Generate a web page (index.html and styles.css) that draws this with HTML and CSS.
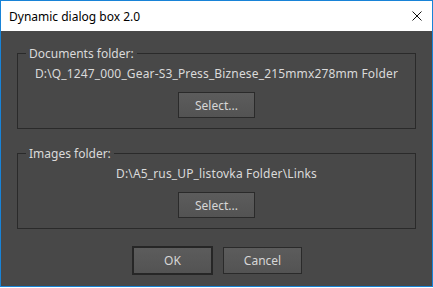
FILE: index.html
```html
<!DOCTYPE html>
<html>
<head>
<meta charset="utf-8">
<link rel="stylesheet" href="styles.css">
</head>
<body>
<div class="window">
  <div class="titlebar">
    <span class="title">Dynamic dialog box 2.0</span>
    <span class="close">
      <svg width="10" height="10" viewBox="0 0 10 10"><path d="M0.5 0.5 L9.5 9.5 M9.5 0.5 L0.5 9.5" stroke="#111" stroke-width="1" fill="none"/></svg>
    </span>
  </div>
  <div class="content">
    <fieldset class="group">
      <legend class="legend">Documents folder:</legend>
      <div class="path">D:\Q_1247_000_Gear-S3_Press_Biznese_215mmx278mm Folder</div>
      <button class="btn select">Select...</button>
    </fieldset>
    <fieldset class="group">
      <legend class="legend">Images folder:</legend>
      <div class="path">D:\A5_rus_UP_listovka Folder\Links</div>
      <button class="btn select">Select...</button>
    </fieldset>
    <div class="actions">
      <button class="btn ok">OK</button>
      <button class="btn cancel">Cancel</button>
    </div>
  </div>
</div>
</body>
</html>
```

FILE: styles.css
```css
html, body {
  margin: 0;
  padding: 0;
  background: #ffffff;
}
.window {
  box-sizing: border-box;
  width: 433px;
  height: 287px;
  border: 1px solid #1883d7;
  display: flex;
  flex-direction: column;
  font-family: "Noto Sans", "Open Sans", sans-serif;
  font-size: 12px;
}
.titlebar {
  height: 30px;
  flex: none;
  background: #ffffff;
  display: flex;
  align-items: center;
  justify-content: space-between;
  padding: 0 10px 0 8px;
}
.title {
  color: #000;
  font-size: 12px;
}
.close {
  display: flex;
  width: 10px;
  height: 10px;
}
.content {
  flex: 1;
  background: #484848;
  padding: 15px 16px 0 16px;
  display: flex;
  flex-direction: column;
  gap: 17px;
}
.group {
  margin: 0;
  border: 1px solid #2a2a2a;
  padding: 5px 0 10px;
  display: flex;
  flex-direction: column;
  align-items: center;
  gap: 10px;
}
.legend {
  margin-left: 8px;
  padding: 0 3px;
  line-height: 15px;
  color: #dadada;
}
.path {
  line-height: 16px;
  color: #dadada;
  white-space: nowrap;
  letter-spacing: 0.15px;
}
.btn {
  font-family: inherit;
  font-size: 12px;
  color: #d6d6d6;
  background: linear-gradient(#5c5c5c, #535353);
  border: 1px solid #2a2a2a;
  padding: 0;
  margin: 0;
  box-sizing: border-box;
}
.select {
  width: 77px;
  height: 26px;
}
.actions {
  display: flex;
  justify-content: center;
  align-items: center;
  gap: 10px;
  padding-left: 1px;
}
.ok {
  width: 81px;
  height: 29px;
  border: 2px solid #262626;
}
.cancel {
  width: 79px;
  height: 27px;
}
```
